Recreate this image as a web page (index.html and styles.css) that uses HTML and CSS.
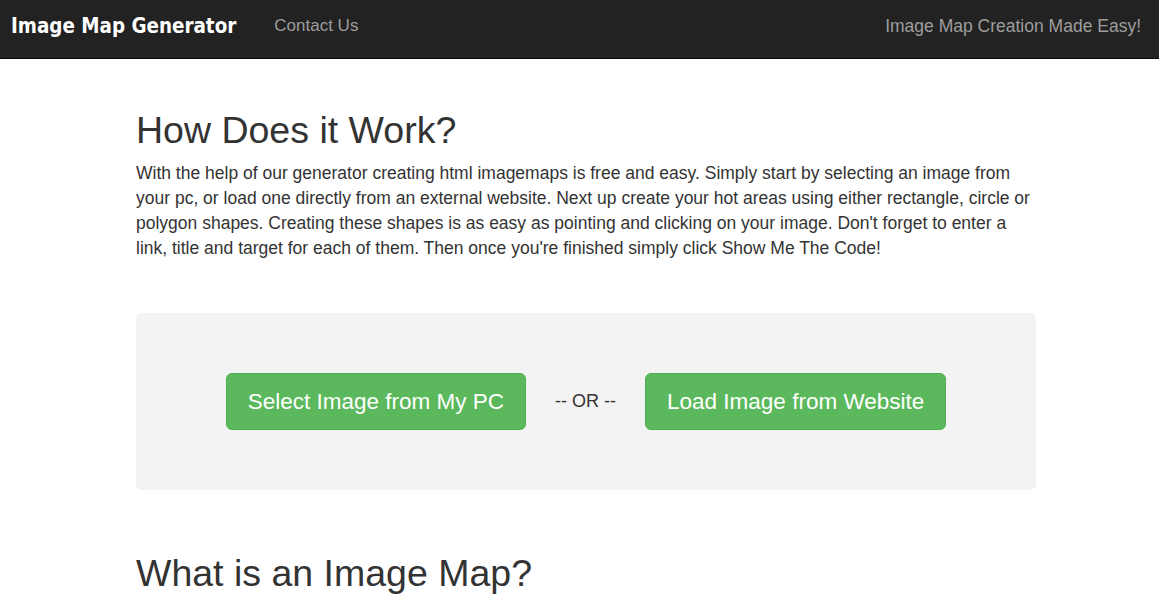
FILE: index.html
```html
<!DOCTYPE html>
<html>
<head>
<meta charset="utf-8">
<title>Image Map Generator</title>
<link rel="stylesheet" href="styles.css">
</head>
<body>
<nav class="navbar">
  <div class="nav-left">
    <a class="brand" href="#">Image Map Generator</a>
    <a class="nav-link" href="#">Contact Us</a>
  </div>
  <span class="nav-right">Image Map Creation Made Easy!</span>
</nav>
<main class="content">
  <h1 class="title first">How Does it Work?</h1>
  <p class="intro">With the help of our generator creating html imagemaps is free and easy. Simply start by selecting an image from your pc, or load one directly from an external website. Next up create your hot areas using either rectangle, circle or polygon shapes. Creating these shapes is as easy as pointing and clicking on your image. Don't forget to enter a link, title and target for each of them. Then once you're finished simply click Show Me The Code!</p>
  <div class="well">
    <button class="btn">Select Image from My PC</button>
    <span class="or">-- OR --</span>
    <button class="btn">Load Image from Website</button>
  </div>
  <h2 class="title second">What is an Image Map?</h2>
</main>
</body>
</html>
```
FILE: styles.css
```css
html, body {
  margin: 0;
  padding: 0;
  background: #fff;
  font-family: "Liberation Sans", Arial, sans-serif;
  color: #333;
}
.navbar {
  display: flex;
  align-items: center;
  justify-content: space-between;
  box-sizing: border-box;
  height: 59px;
  background: #222;
  border-bottom: 1px solid #080808;
  padding: 0 18px 6px 11px;
}
.nav-left {
  display: flex;
  align-items: center;
  gap: 38px;
}
.brand {
  font-family: "DejaVu Sans Condensed", "DejaVu Sans", sans-serif;
  font-weight: bold;
  font-size: 20.4px;
  color: #fff;
  text-decoration: none;
}
.nav-link, .nav-right {
  color: #9d9d9d;
  font-size: 17px;
  text-decoration: none;
}
.nav-right {
  font-size: 17.5px;
}
.content {
  width: 900px;
  margin: 0 0 0 136px;
}
.title {
  font-size: 37.5px;
  font-weight: 500;
  line-height: 1.1;
  color: #333;
}
.first {
  margin: 51px 0 10px;
}
.second {
  margin: 63px 0 10px;
}
.intro {
  font-size: 17.5px;
  line-height: 25px;
  margin: 0;
}
.well {
  margin-top: 52px;
  height: 177px;
  background: #f3f3f3;
  border-radius: 6px;
  display: flex;
  align-items: center;
  justify-content: center;
  gap: 29px;
}
.btn {
  font-family: "Liberation Sans", Arial, sans-serif;
  font-size: 22.5px;
  color: #fff;
  background: #5cb85c;
  border: 1px solid #4cae4c;
  border-radius: 6px;
  height: 57px;
  padding: 0 21px;
  cursor: pointer;
}
.or {
  font-size: 18px;
  color: #333;
}
```
